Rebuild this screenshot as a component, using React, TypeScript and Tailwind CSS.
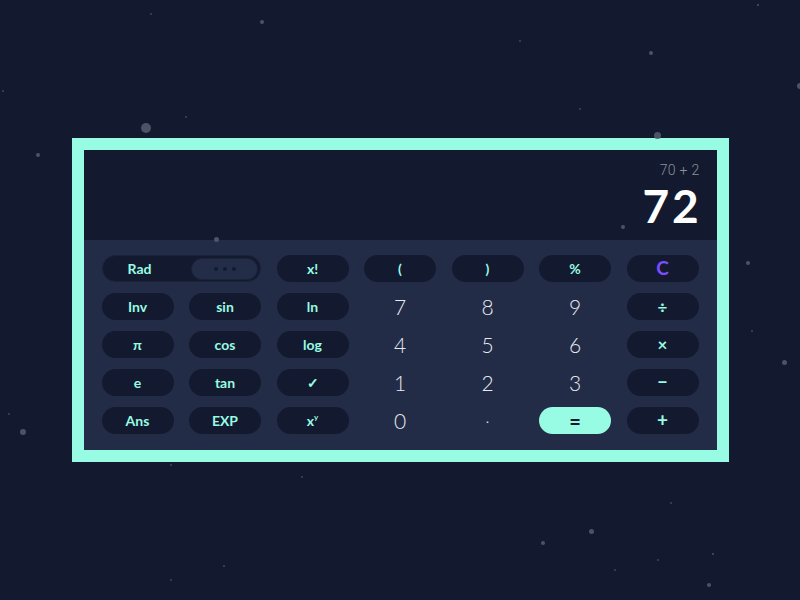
import React from "react";

const stars: [number, number, number][] = [
  [151, 14, 1.5],
  [262, 22, 4],
  [3, 91, 1.5],
  [186, 117, 1.5],
  [146, 128, 10],
  [520, 41, 2],
  [651, 53, 3.5],
  [758, 5, 2.5],
  [800, 86, 6],
  [580, 109, 2],
  [657, 135, 7],
  [38, 155, 4],
  [9, 414, 2],
  [23, 432, 6],
  [748, 263, 4],
  [752, 331, 2],
  [784, 362, 5],
  [171, 465, 2],
  [302, 477, 2],
  [671, 503, 2],
  [591, 531, 5],
  [543, 543, 4],
  [713, 554, 2.5],
  [658, 560, 1.5],
  [615, 570, 1.5],
  [224, 566, 2],
  [171, 580, 2],
  [709, 585, 4],
  [216, 239, 5],
  [623, 227, 4],
];

const teal = "text-[#98fbe3]";

function Pill({ children, className = "" }: { children: React.ReactNode; className?: string }) {
  return (
    <div
      className={`flex h-[27px] items-center justify-center rounded-full bg-[#131a2f] text-[14px] font-bold ${teal} ${className}`}
    >
      {children}
    </div>
  );
}

function Digit({ children }: { children: React.ReactNode }) {
  return (
    <div className="flex h-[27px] items-center justify-center text-[21px] font-light text-[#e8eaef]">
      {children}
    </div>
  );
}

export default function App() {
  return (
    <div
      className="relative flex h-[600px] w-[800px] items-center justify-center overflow-hidden bg-[#131a30]"
      style={{ fontFamily: "Lato, 'Open Sans', sans-serif" }}
    >
      <div className="box-border flex h-[324px] w-[657px] flex-col border-[12px] border-[#98fbe3] bg-[#131a2f]">
        <div className="flex h-[90px] flex-col items-end pr-[17px] pt-[11px]">
          <div
            className="text-[14px] font-light leading-[18px] tracking-[0.02em] text-[#8b909c]"
            style={{ fontFamily: "Roboto, sans-serif" }}
          >
            70 + 2
          </div>
          <div className="mt-[7px] text-[46px] font-bold leading-[40px] tracking-[0.06em] text-white mr-[-2px]">
            72
          </div>
        </div>
        <div className="grid flex-1 grid-cols-7 grid-rows-5 gap-x-[15.5px] gap-y-[11px] bg-[#222c46] px-[18px] pb-[16px] pt-[15px]">
          <div className="col-span-2 flex h-[27px] items-center rounded-full border border-[#1b2339] bg-[#131a2f] p-[2px]">
            <div className={`flex w-[70px] items-center justify-center text-[14px] font-bold ${teal}`}>Rad</div>
            <div className="ml-auto flex h-[22px] w-[67px] items-center justify-center gap-[5px] rounded-full border border-[#1b2339] bg-[#232d47]">
              <span className="h-[4px] w-[4px] rounded-full bg-[#131a2f]" />
              <span className="h-[4px] w-[4px] rounded-full bg-[#131a2f]" />
              <span className="h-[4px] w-[4px] rounded-full bg-[#131a2f]" />
            </div>
          </div>
          <Pill>x!</Pill>
          <Pill>(</Pill>
          <Pill>)</Pill>
          <Pill>%</Pill>
          <Pill className="!text-[#7c4dff] !text-[19px]">C</Pill>

          <Pill>Inv</Pill>
          <Pill>sin</Pill>
          <Pill>ln</Pill>
          <Digit>7</Digit>
          <Digit>8</Digit>
          <Digit>9</Digit>
          <Pill className="!text-[17px]">÷</Pill>

          <Pill>π</Pill>
          <Pill>cos</Pill>
          <Pill>log</Pill>
          <Digit>4</Digit>
          <Digit>5</Digit>
          <Digit>6</Digit>
          <Pill className="!text-[17px]">×</Pill>

          <Pill>e</Pill>
          <Pill>tan</Pill>
          <Pill>✓</Pill>
          <Digit>1</Digit>
          <Digit>2</Digit>
          <Digit>3</Digit>
          <Pill className="!text-[18px]">−</Pill>

          <Pill>Ans</Pill>
          <Pill>EXP</Pill>
          <Pill>
            x<sup className="text-[8px]">y</sup>
          </Pill>
          <Digit>0</Digit>
          <Digit>
            <span className="text-[16px]">·</span>
          </Digit>
          <div className="flex h-[27px] items-center justify-center rounded-full bg-[#98fbe3] text-[20px] font-bold text-[#131a2f]">
            =
          </div>
          <Pill className="!text-[19px]">+</Pill>
        </div>
      </div>
      <div className="pointer-events-none absolute inset-0">
        {stars.map(([x, y, d], i) => (
          <div
            key={i}
            className="absolute rounded-full bg-[#535a6b]"
            style={{ left: x - d / 2, top: y - d / 2, width: d, height: d, opacity: d < 2.5 ? 0.7 : 0.9 }}
          />
        ))}
      </div>
    </div>
  );
}
